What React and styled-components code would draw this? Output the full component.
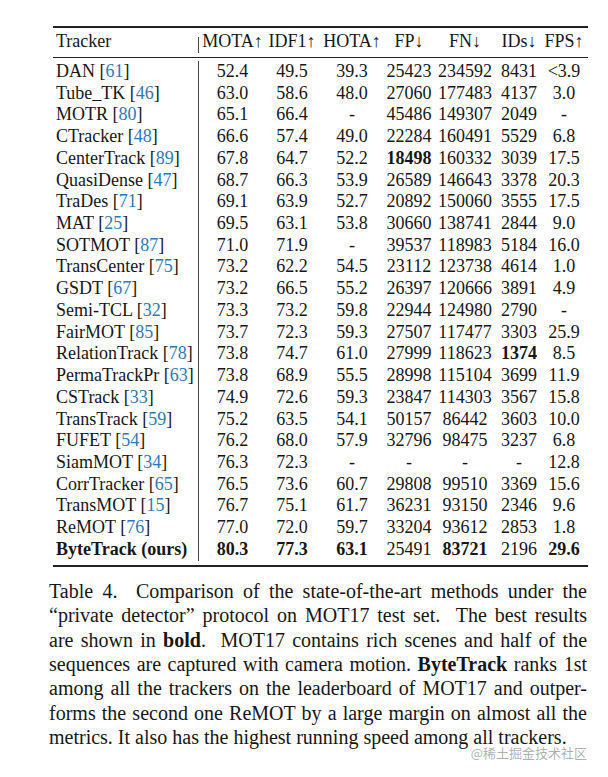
import styled, { createGlobalStyle } from "styled-components";

const GlobalStyle = createGlobalStyle`
  body {
    margin: 0;
    background: #fff;
  }
`;

const COLUMNS = "146px 67px 52px 68px 46px 66px 42px 48px";

const HEADERS = ["MOTA↑", "IDF1↑", "HOTA↑", "FP↓", "FN↓", "IDs↓", "FPS↑"];

// name, cite, values; a leading "*" marks a bold value
const ROWS = [
  ["DAN", "61", ["52.4", "49.5", "39.3", "25423", "234592", "8431", "<3.9"]],
  ["Tube_TK", "46", ["63.0", "58.6", "48.0", "27060", "177483", "4137", "3.0"]],
  ["MOTR", "80", ["65.1", "66.4", "-", "45486", "149307", "2049", "-"]],
  ["CTracker", "48", ["66.6", "57.4", "49.0", "22284", "160491", "5529", "6.8"]],
  ["CenterTrack", "89", ["67.8", "64.7", "52.2", "*18498", "160332", "3039", "17.5"]],
  ["QuasiDense", "47", ["68.7", "66.3", "53.9", "26589", "146643", "3378", "20.3"]],
  ["TraDes", "71", ["69.1", "63.9", "52.7", "20892", "150060", "3555", "17.5"]],
  ["MAT", "25", ["69.5", "63.1", "53.8", "30660", "138741", "2844", "9.0"]],
  ["SOTMOT", "87", ["71.0", "71.9", "-", "39537", "118983", "5184", "16.0"]],
  ["TransCenter", "75", ["73.2", "62.2", "54.5", "23112", "123738", "4614", "1.0"]],
  ["GSDT", "67", ["73.2", "66.5", "55.2", "26397", "120666", "3891", "4.9"]],
  ["Semi-TCL", "32", ["73.3", "73.2", "59.8", "22944", "124980", "2790", "-"]],
  ["FairMOT", "85", ["73.7", "72.3", "59.3", "27507", "117477", "3303", "25.9"]],
  ["RelationTrack", "78", ["73.8", "74.7", "61.0", "27999", "118623", "*1374", "8.5"]],
  ["PermaTrackPr", "63", ["73.8", "68.9", "55.5", "28998", "115104", "3699", "11.9"]],
  ["CSTrack", "33", ["74.9", "72.6", "59.3", "23847", "114303", "3567", "15.8"]],
  ["TransTrack", "59", ["75.2", "63.5", "54.1", "50157", "86442", "3603", "10.0"]],
  ["FUFET", "54", ["76.2", "68.0", "57.9", "32796", "98475", "3237", "6.8"]],
  ["SiamMOT", "34", ["76.3", "72.3", "-", "-", "-", "-", "12.8"]],
  ["CorrTracker", "65", ["76.5", "73.6", "60.7", "29808", "99510", "3369", "15.6"]],
  ["TransMOT", "15", ["76.7", "75.1", "61.7", "36231", "93150", "2346", "9.6"]],
  ["ReMOT", "76", ["77.0", "72.0", "59.7", "33204", "93612", "2853", "1.8"]],
];

const OURS = ["*80.3", "*77.3", "*63.1", "25491", "*83721", "2196", "*29.6"];

const Page = styled.div`
  position: relative;
  width: 608px;
  height: 777px;
  padding-top: 26px;
  box-sizing: border-box;
  font-family: "Liberation Serif", "Times New Roman", serif;
  color: #161616;
  overflow: hidden;
`;

const Table = styled.div`
  width: 535px;
  margin-left: 53px;
  font-size: 18px;
`;

const Rule = styled.div`
  height: ${(p) => (p.$thick ? "2px" : "1px")};
  background: #222;
  margin-top: ${(p) => p.$gap || 0}px;
`;

const Row = styled.div`
  display: grid;
  grid-template-columns: ${COLUMNS};
  height: 21.73px;
  line-height: 21.73px;
  white-space: nowrap;
`;

const HeaderRow = styled(Row)`
  margin-top: 3px;
`;

const Body = styled.div`
  padding-top: 3.3px;
`;

const NameCell = styled.div`
  padding-left: 3px;
  font-weight: ${(p) => (p.$bold ? 700 : 400)};
  border-right: ${(p) => (p.$head ? "none" : "1px solid #444")};
  background: ${(p) =>
    p.$head
      ? "linear-gradient(#444, #444) right bottom / 1px 16px no-repeat"
      : "none"};
`;

const Cell = styled.div`
  display: flex;
  justify-content: center;
  font-weight: ${(p) => (p.$bold ? 700 : 400)};
`;

const Cite = styled.span`
  color: #2f78b6;
`;

const Caption = styled.div`
  width: 538px;
  margin: 12.6px 0 0 49px;
  font-size: 20px;
  line-height: 24.3px;
  white-space: nowrap;
`;

const CaptionLine = styled.div`
  white-space: normal;
  text-align: ${(p) => (p.$last ? "left" : "justify")};
  text-align-last: ${(p) => (p.$last ? "left" : "justify")};
`;

const Watermark = styled.div`
  position: absolute;
  right: 21px;
  top: 745px;
  font-family: "Noto Sans CJK SC", "Noto Sans", sans-serif;
  font-size: 13px;
  line-height: 15px;
  color: rgba(150, 150, 150, 0.75);
  text-shadow: 0 0 1px #fff;
`;

const Value = ({ v }) => {
  const bold = v.startsWith("*");
  return <Cell $bold={bold}>{bold ? v.slice(1) : v}</Cell>;
};

const App = () => {
  return (
    <>
      <GlobalStyle />
      <Page>
        <Table>
          <Rule $thick />
          <HeaderRow>
            <NameCell $head>Tracker</NameCell>
            {HEADERS.map((h) => (
              <Cell key={h}>{h}</Cell>
            ))}
          </HeaderRow>
          <Rule $gap={4} />
          <Body>
            {ROWS.map(([name, cite, values]) => (
              <Row key={name}>
                <NameCell>
                  {name} [<Cite>{cite}</Cite>]
                </NameCell>
                {values.map((v, i) => (
                  <Value key={i} v={v} />
                ))}
              </Row>
            ))}
            <Row>
              <NameCell $bold>ByteTrack (ours)</NameCell>
              {OURS.map((v, i) => (
                <Value key={i} v={v} />
              ))}
            </Row>
          </Body>
          <Rule $thick $gap={4} />
        </Table>
        <Caption>
          <CaptionLine>
            Table 4.&nbsp; Comparison of the state-of-the-art methods under the
          </CaptionLine>
          <CaptionLine>
            “private detector” protocol on MOT17 test set.&nbsp; The best results
          </CaptionLine>
          <CaptionLine>
            are shown in <b>bold</b>.&nbsp; MOT17 contains rich scenes and half of the
          </CaptionLine>
          <CaptionLine>
            sequences are captured with camera motion. <b>ByteTrack</b> ranks 1st
          </CaptionLine>
          <CaptionLine>
            among all the trackers on the leaderboard of MOT17 and outper-
          </CaptionLine>
          <CaptionLine>
            forms the second one ReMOT by a large margin on almost all the
          </CaptionLine>
          <CaptionLine $last>
            metrics. It also has the highest running speed among all trackers.
          </CaptionLine>
        </Caption>
        <Watermark>@稀土掘金技术社区</Watermark>
      </Page>
    </>
  );
};

export default App;
